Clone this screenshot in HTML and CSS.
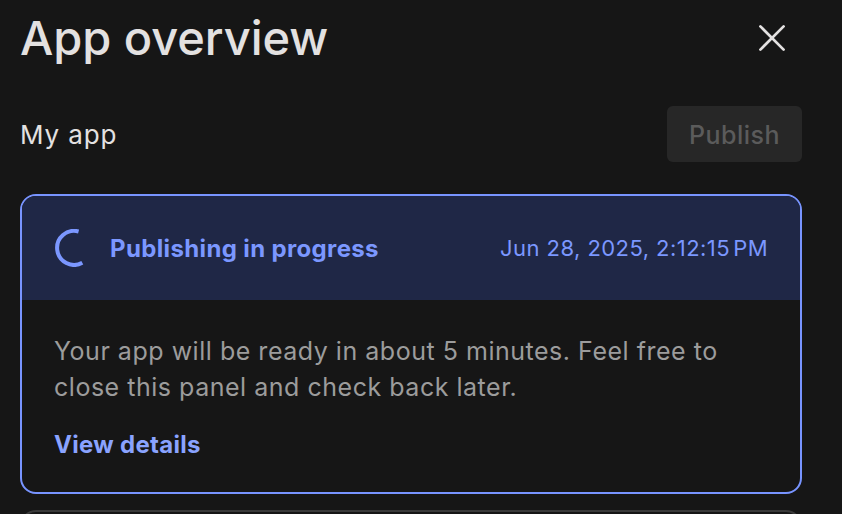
FILE: index.html
```html
<!DOCTYPE html>
<html lang="en">
<head>
<meta charset="utf-8">
<title>App overview</title>
<link rel="stylesheet" href="styles.css">
</head>
<body>
<main class="panel">
  <header class="panel-header">
    <h1 class="title">App overview</h1>
    <button class="close" aria-label="Close">
      <svg width="28" height="28" viewBox="0 0 28 28"><path d="M2.4 2.4 25.6 25.6M25.6 2.4 2.4 25.6"/></svg>
    </button>
  </header>
  <div class="app-row">
    <span class="app-name">My app</span>
    <button class="publish" disabled>Publish</button>
  </div>
  <section class="card">
    <div class="card-header">
      <svg class="spinner" width="38" height="38" viewBox="0 0 38 38"><path d="M23.6 2.5A17 17 0 1 0 27.3 33.8"/></svg>
      <span class="status">Publishing in progress</span>
      <time class="time">Jun 28, 2025, 2:12:15<span class="meridiem"> PM</span></time>
    </div>
    <div class="card-body">
      <p class="message">Your app will be ready in about 5 minutes. Feel free to<br>close this panel and check back later.</p>
      <a class="details">View details</a>
    </div>
  </section>
  <section class="next-card"></section>
</main>
</body>
</html>
```
FILE: styles.css
```css
* { box-sizing: border-box; }
body { margin: 0; background: #161616; color: #e3e1e1; font-family: Inter, sans-serif; }
.panel { height: 514px; padding: 0 40px 0 20px; overflow: hidden; }
.panel-header { display: flex; align-items: center; justify-content: space-between; height: 76px; padding-right: 16px; }
.title { margin: 0; font: 500 47px/60px Inter, sans-serif; letter-spacing: -.05px; }
.close { display: flex; padding: 0; border: 0; background: none; }
.close path { fill: none; stroke: #e3e1e1; stroke-width: 2.7; stroke-linecap: round; }
.app-row { display: flex; align-items: center; justify-content: space-between; height: 56px; margin-top: 30px; }
.app-name { font-size: 26px; letter-spacing: .9px; }
.publish { width: 135px; height: 56px; padding: 2px 0 0; border: 0; border-radius: 6px; background: #272727; color: #5b5b5b; font: 500 25px Inter, sans-serif; letter-spacing: .5px; }
.card { height: 300px; margin-top: 32px; border: 2px solid #7894ff; border-radius: 16px; overflow: hidden; }
.card-header { display: flex; align-items: center; height: 104px; padding: 0 32px 0 33px; background: #1f2746; color: #7b97ff; }
.spinner { flex: none; }
.spinner path { fill: none; stroke: #7b97ff; stroke-width: 4; }
.status { margin-left: 17px; font-size: 24px; font-weight: 700; letter-spacing: .36px; }
.time { margin-left: auto; font-size: 22px; letter-spacing: .45px; white-space: nowrap; }
.meridiem { word-spacing: -3.5px; }
.card-body { padding: 33px 32px; }
.message { margin: 0; color: #9c9c9c; font-size: 25px; line-height: 36px; white-space: nowrap; letter-spacing: .52px; }
.details { display: block; margin-top: 23px; color: #8aa3ff; font-size: 24px; line-height: 34px; font-weight: 700; letter-spacing: .3px; }
.next-card { height: 40px; margin-top: 16px; border: 2px solid #3a3a3a; border-radius: 16px; }
```
